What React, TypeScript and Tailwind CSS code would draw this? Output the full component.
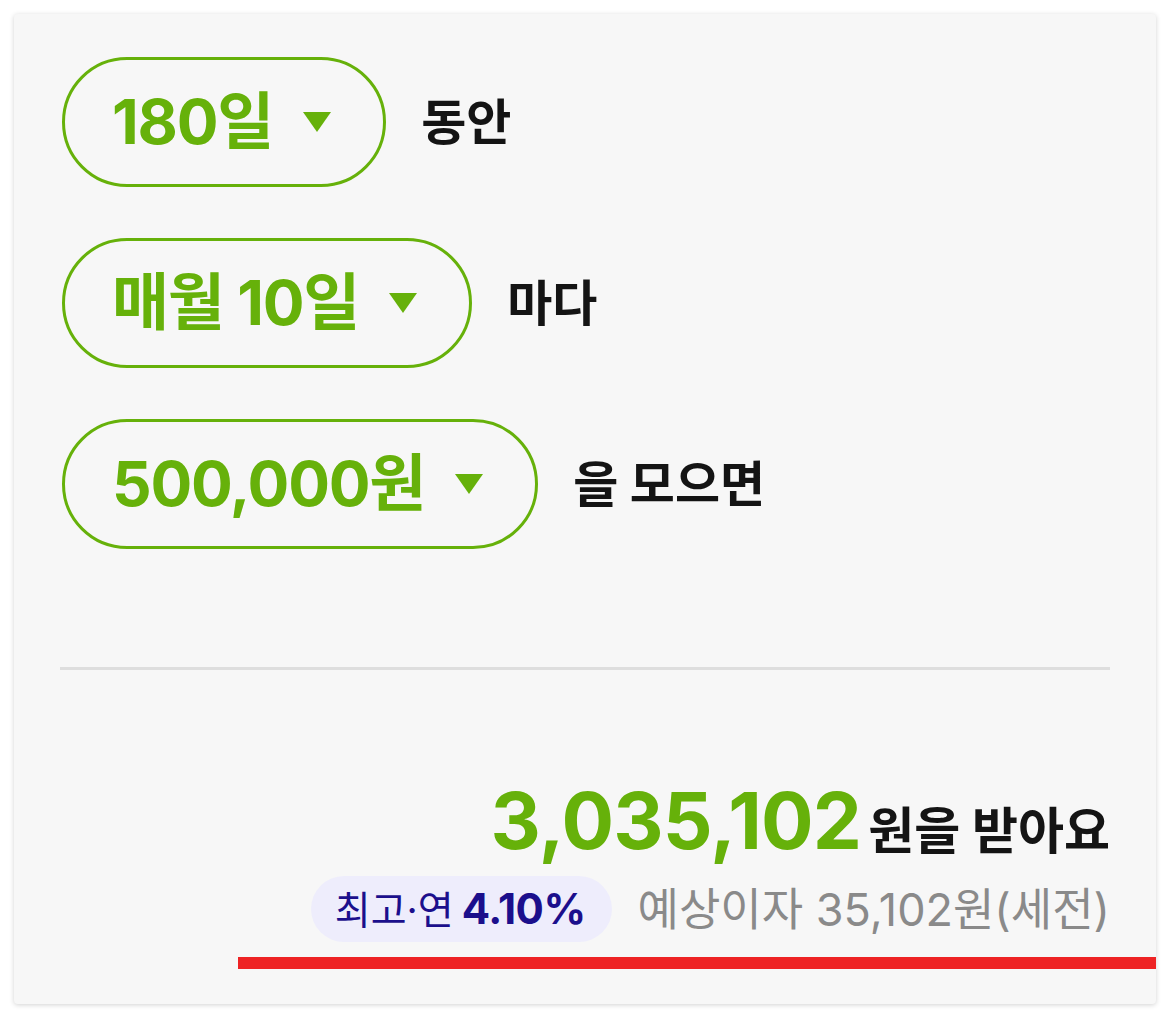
import React from "react";

const Arrow = () => (
  <svg width="28" height="20" viewBox="0 0 28 20" className="shrink-0">
    <polygon points="0,0 28,0 14,20" fill="#66b10a" />
  </svg>
);

const Pill = ({ label }: { label: string }) => (
  <div className="h-[130px] rounded-full border-[3px] border-[#66b10a] pl-[47px] pr-[52px] flex items-center gap-[30px]">
    <span className="text-[62px] font-bold leading-none text-[#66b10a] tracking-[-1.2px]">{label}</span>
    <Arrow />
  </div>
);

const Row = ({ pill, text }: { pill: string; text: string }) => (
  <div className="flex items-center gap-[35px]">
    <Pill label={pill} />
    <span className="text-[49px] font-bold leading-none text-[#141414]">{text}</span>
  </div>
);

export default function App() {
  return (
    <div
      className="min-h-screen bg-white p-[14px]"
      style={{ fontFamily: 'Inter, "Noto Sans CJK KR", sans-serif' }}
    >
      <div className="w-[1142px] h-[990px] bg-[#f7f7f7] rounded-[4px] shadow-[0_1px_5px_rgba(0,0,0,0.18)] flex flex-col pt-[43px] pl-[48px] pr-[46px]">
        <div className="flex flex-col gap-[51px]">
          <Row pill="180일" text="동안" />
          <Row pill="매월 10일" text="마다" />
          <Row pill="500,000원" text="을 모으면" />
        </div>
        <div className="mt-[118px] -ml-[2px] h-[3px] bg-[#dedede]" />
        <div className="mt-[112px] flex justify-end items-baseline gap-[7px]">
          <span className="text-[78px] font-bold leading-none text-[#66b10a] tracking-[-0.8px]">3,035,102</span>
          <span className="text-[50px] font-bold leading-none text-[#141414]">원을 받아요</span>
        </div>
        <div className="mt-[16px] flex justify-end items-center gap-[26px]">
          <div className="h-[66px] rounded-full bg-[#eeedfc] pl-[24px] pr-[26px] flex items-center gap-[8px] text-[#1b0f8c]">
            <span className="text-[39px] leading-none">최고·연</span>
            <span className="text-[42px] font-bold leading-none tracking-[-0.5px]">4.10%</span>
          </div>
          <span className="text-[45px] leading-none text-[#8a8a8a]">예상이자 35,102원(세전)</span>
        </div>
        <div className="mt-[15px] self-end -mr-[46px] w-[918px] h-[12px] bg-[#ee2324]" />
      </div>
    </div>
  );
}
